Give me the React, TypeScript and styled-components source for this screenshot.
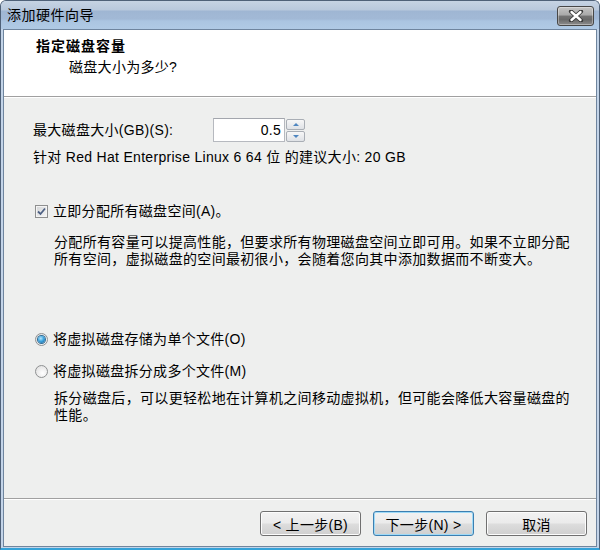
import React from "react";
import styled, { createGlobalStyle, css } from "styled-components";

const Global = createGlobalStyle`
  html, body { margin: 0; padding: 0; background: #ffffff; }
  body {
    width: 600px; height: 550px; overflow: hidden;
    font-family: "Liberation Sans", "Noto Sans CJK SC", sans-serif;
    font-size: 14px; color: #000;
  }
  * { box-sizing: border-box; }
`;

const Window = styled.div`
  width: 600px;
  height: 550px;
  display: flex;
  flex-direction: column;
  background: #c3d4e8;
  border: 1px solid #4f6178;
  border-bottom: 2px solid #34a2d8;
  border-radius: 6px 6px 0 0;
  overflow: hidden;
`;

const TitleBar = styled.div`
  height: 28px;
  flex: none;
  display: flex;
  align-items: center;
  justify-content: space-between;
  padding: 0 5px 0 6px;
  background: linear-gradient(
    to bottom,
    #c6d3e3 0px,
    #b8c8dc 9px,
    #9fb6d3 10px,
    #a2b9d6 18px,
    #abc5e1 20px,
    #b0cae5 28px
  );
`;

const Title = styled.span`
  font-size: 14px;
  line-height: 17px;
  letter-spacing: 0.5px;
  color: #000;
`;

const CloseButton = styled.div`
  width: 37px;
  height: 20px;
  margin-top: 1px;
  border: 1px solid #474747;
  border-radius: 3px;
  display: flex;
  align-items: center;
  justify-content: center;
  background: linear-gradient(
    to bottom,
    #c4c4c4 0%,
    #a9a9a9 45%,
    #747474 50%,
    #6a6a6a 70%,
    #8c8c8c 100%
  );
  box-shadow: inset 0 0 0 1px rgba(255, 255, 255, 0.35);
`;

const Client = styled.div`
  flex: 1;
  margin: 0 2px 1px 2px;
  border: 1px solid #6f859e;
  background: #eeefee;
  display: flex;
  flex-direction: column;
`;

const Header = styled.div`
  height: 66px;
  flex: none;
  background: #ffffff;
  padding: 8px 0 0 32px;
`;

const Heading = styled.div`
  font-weight: bold;
  font-size: 14px;
  line-height: 17px;
  letter-spacing: 1px;
`;

const SubHeading = styled.div`
  margin: 4px 0 0 33px;
  line-height: 17px;
  letter-spacing: 0.3px;
`;

const Separator = styled.div`
  height: 2px;
  flex: none;
  border-top: 1px solid #a0a0a0;
  border-bottom: 1px solid #ffffff;
`;

const Body = styled.div`
  flex: 1;
  padding: 20px 0 0 29px;
  display: flex;
  flex-direction: column;
`;

const Row = styled.div<{ $mt?: number }>`
  display: flex;
  align-items: center;
  margin-top: ${(p) => p.$mt ?? 0}px;
  line-height: 17px;
  letter-spacing: 0.3px;
`;

const Label = styled.span`
  width: 180px;
  flex: none;
  line-height: 17px;
  letter-spacing: 0.3px;
`;

const Text = styled.div<{ $mt?: number }>`
  margin-top: ${(p) => p.$mt ?? 0}px;
  line-height: 17px;
  letter-spacing: 0.3px;
  white-space: nowrap;
`;

const Para = styled.div<{ $mt: number }>`
  margin: ${(p) => p.$mt}px 0 0 21px;
  line-height: 17px;
  letter-spacing: 0.33px;
  white-space: nowrap;
`;

const NumberBox = styled.div`
  width: 72px;
  height: 24px;
  background: #ffffff;
  border: 1px solid #b6b9bf;
  border-top-color: #a3a6ad;
  display: flex;
  align-items: center;
  justify-content: flex-end;
  padding-right: 3px;
  font-size: 14px;
`;

const Spinner = styled.div`
  width: 20px;
  height: 24px;
  display: flex;
  flex-direction: column;
  gap: 1px;
  padding: 1px 0 0 1px;
`;

const SpinButton = styled.div`
  flex: 1;
  border: 1px solid #a9aeb5;
  border-radius: 2px;
  background: linear-gradient(to bottom, #f7f7f7, #dfe2e6);
  display: flex;
  align-items: center;
  justify-content: center;
`;

const Arrow = styled.span<{ $up?: boolean }>`
  width: 0;
  height: 0;
  border-left: 3px solid transparent;
  border-right: 3px solid transparent;
  ${(p) =>
    p.$up
      ? css`border-bottom: 3px solid #4f86c0;`
      : css`border-top: 3px solid #4f86c0;`}
`;

const CheckRow = styled.label<{ $mt: number }>`
  display: flex;
  align-items: center;
  gap: 5px;
  margin: ${(p) => p.$mt}px 0 0 2px;
  line-height: 17px;
  letter-spacing: 0.3px;
`;

const CheckBox = styled.span`
  width: 13px;
  height: 13px;
  flex: none;
  border: 1px solid #8e8f8f;
  background: linear-gradient(135deg, #d2d4d6 0%, #e8e9ea 60%, #f6f6f6 100%);
  box-shadow: inset 0 0 0 1px #f4f4f4;
  display: flex;
  align-items: center;
  justify-content: center;
`;

const Radio = styled.span<{ $on?: boolean }>`
  width: 13px;
  height: 13px;
  flex: none;
  border-radius: 50%;
  border: 1px solid #8f9192;
  background: radial-gradient(circle at 60% 65%, #ffffff 0%, #e6e6e6 70%, #d4d4d4 100%);
  display: flex;
  align-items: center;
  justify-content: center;
  &::after {
    content: "";
    width: 7px;
    height: 7px;
    border-radius: 50%;
    display: ${(p) => (p.$on ? "block" : "none")};
    background: radial-gradient(circle at 40% 35%, #b8e6fb 0%, #3fa6e0 45%, #12598f 100%);
    box-shadow: 0 0 0 1px #2f6c95;
  }
`;

const Footer = styled.div`
  flex: none;
  display: flex;
  flex-direction: column;
`;

const ButtonBar = styled.div`
  display: flex;
  justify-content: flex-end;
  gap: 12px;
  padding: 11px 9px 10px 0;
`;

const Button = styled.div<{ $default?: boolean }>`
  width: 101px;
  height: 25px;
  border: 1px solid ${(p) => (p.$default ? "#3c7fb1" : "#707070")};
  border-radius: 3px;
  display: flex;
  align-items: center;
  justify-content: center;
  font-size: 14px;
  letter-spacing: 0.3px;
  background: linear-gradient(
    to bottom,
    #f2f2f2 0%,
    #ebebeb 48%,
    #dddddd 52%,
    #cfcfcf 100%
  );
  box-shadow: inset 0 0 0 1px ${(p) => (p.$default ? "#9fdaf7" : "#fcfcfc")};
`;

export default function App() {
  return (
    <>
      <Global />
      <Window>
        <TitleBar>
          <Title>添加硬件向导</Title>
          <CloseButton>
            <svg width="16" height="12" viewBox="0 0 16 12">
              <path
                d="M3 1.5 L13 10.5 M13 1.5 L3 10.5"
                stroke="#3a3a3a"
                strokeWidth="4.2"
                strokeLinecap="round"
              />
              <path
                d="M3.5 2 L12.5 10 M12.5 2 L3.5 10"
                stroke="#ffffff"
                strokeWidth="2.4"
                strokeLinecap="round"
              />
            </svg>
          </CloseButton>
        </TitleBar>
        <Client>
          <Header>
            <Heading>指定磁盘容量</Heading>
            <SubHeading>磁盘大小为多少?</SubHeading>
          </Header>
          <Separator />
          <Body>
            <Row>
              <Label>最大磁盘大小(GB)(S):</Label>
              <NumberBox>0.5</NumberBox>
              <Spinner>
                <SpinButton>
                  <Arrow $up />
                </SpinButton>
                <SpinButton>
                  <Arrow />
                </SpinButton>
              </Spinner>
            </Row>
            <Text $mt={7}>针对 Red Hat Enterprise Linux 6 64 位 的建议大小: 20 GB</Text>
            <CheckRow $mt={37}>
              <CheckBox>
                <svg width="9" height="9" viewBox="0 0 9 9">
                  <path
                    d="M1 4.5 L3.5 7 L8 1.5"
                    stroke="#4e6184"
                    strokeWidth="1.8"
                    fill="none"
                  />
                </svg>
              </CheckBox>
              <span>立即分配所有磁盘空间(A)。</span>
            </CheckRow>
            <Para $mt={14}>
              分配所有容量可以提高性能，但要求所有物理磁盘空间立即可用。如果不立即分配
              <br />
              所有空间，虚拟磁盘的空间最初很小，会随着您向其中添加数据而不断变大。
            </Para>
            <CheckRow $mt={63}>
              <Radio $on />
              <span>将虚拟磁盘存储为单个文件(O)</span>
            </CheckRow>
            <CheckRow $mt={15}>
              <Radio />
              <span>将虚拟磁盘拆分成多个文件(M)</span>
            </CheckRow>
            <Para $mt={10}>
              拆分磁盘后，可以更轻松地在计算机之间移动虚拟机，但可能会降低大容量磁盘的
              <br />
              性能。
            </Para>
          </Body>
          <Footer>
            <Separator />
            <ButtonBar>
              <Button>&lt; 上一步(B)</Button>
              <Button $default>下一步(N) &gt;</Button>
              <Button>取消</Button>
            </ButtonBar>
          </Footer>
        </Client>
      </Window>
    </>
  );
}
